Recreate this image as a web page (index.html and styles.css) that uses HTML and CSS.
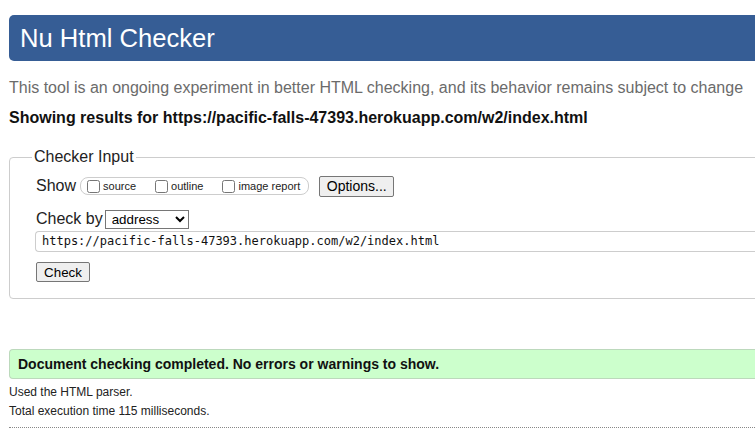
FILE: index.html
```html
<!DOCTYPE html>
<html>
<head>
<meta charset="utf-8">
<link rel="stylesheet" href="styles.css">
</head>
<body>
<div class="page">
  <h1 class="header">Nu Html Checker</h1>
  <p class="intro">This tool is an ongoing experiment in better HTML checking, and its behavior remains subject to change</p>
  <p class="results">Showing results for https://pacific-falls-47393.herokuapp.com/w2/index.html</p>
  <fieldset class="checker">
    <legend class="legend">Checker Input</legend>
    <div class="row show-row">
      <span class="label">Show</span>
      <fieldset class="opts">
        <label class="opt"><input type="checkbox">source</label>
        <label class="opt"><input type="checkbox">outline</label>
        <label class="opt"><input type="checkbox">image report</label>
      </fieldset>
      <button class="btn options">Options...</button>
    </div>
    <div class="row by-row">
      <span class="label">Check by</span>
      <select class="select"><option>address</option></select>
    </div>
    <div class="url">https://pacific-falls-47393.herokuapp.com/w2/index.html</div>
    <button class="btn check">Check</button>
  </fieldset>
  <div class="success">Document checking completed. No errors or warnings to show.</div>
  <p class="meta">Used the HTML parser.</p>
  <p class="meta">Total execution time 115 milliseconds.</p>
  <hr class="dots">
</div>
</body>
</html>
```

FILE: styles.css
```css
html, body {
  margin: 0;
  padding: 0;
  overflow: hidden;
  background: #fff;
}
body {
  font-family: "Liberation Sans", Arial, sans-serif;
  color: #000;
}
.page {
  width: 820px;
  padding: 15px 0 0 9px;
}
.header {
  margin: 0;
  height: 46px;
  line-height: 47px;
  background: #365d95;
  color: #fff;
  font-size: 25.6px;
  font-weight: normal;
  padding-left: 11px;
  border-radius: 5px 0 0 5px;
}
.intro {
  margin: 18px 0 0;
  font-size: 16px;
  line-height: 18px;
  color: #6b6b6b;
}
.results {
  margin: 12px 0 0;
  font-size: 16px;
  line-height: 18px;
  font-weight: bold;
  color: #111;
}
.checker {
  margin: 21px 0 0;
  padding: 7px 0 16px 26px;
  border: 1px solid #cdcdcd;
  border-radius: 4px;
  min-width: 0;
}
.legend {
  padding: 0 2px;
  font-size: 16px;
  color: #222;
  line-height: 18px;
  margin-left: -4px;
}
.row {
  display: flex;
  align-items: center;
}
.label {
  font-size: 16px;
  color: #222;
}
.show-row {
  height: 22px;
  margin-top: 2px;
}
.opts {
  margin: 0 0 0 4px;
  padding: 0 8px 0 6px;
  height: 18px;
  border: 1px solid #cdcdcd;
  border-radius: 8px;
  display: flex;
  align-items: center;
  min-width: 0;
  box-sizing: border-box;
}
.opt {
  display: flex;
  align-items: center;
  font-size: 11px;
  color: #222;
  margin-right: 19px;
}
.opt:last-child {
  margin-right: 0;
}
.opt input {
  margin: 0 3px 0 0;
  width: 13px;
  height: 13px;
}
.btn {
  font-family: "Liberation Sans", Arial, sans-serif;
  font-size: 13.33px;
  background: #efefef;
  border: 1px solid #767676;
  border-radius: 2px;
  color: #000;
  padding: 0 6px;
}
.options {
  margin-left: 10px;
  height: 21px;
  width: 75px;
  font-size: 14px;
}
.by-row {
  margin-top: 12px;
  height: 20px;
}
.select {
  margin-left: 2px;
  width: 84px;
  height: 19px;
  font-family: "Liberation Sans", Arial, sans-serif;
  font-size: 13.33px;
  border: 1px solid #767676;
  border-radius: 0;
  background: #fff;
  padding: 0 0 0 2px;
}
.url {
  margin: 2px 0 0 -1px;
  height: 21px;
  box-sizing: border-box;
  border: 1px solid #cdcdcd;
  border-right: none;
  border-radius: 4px 0 0 4px;
  font-family: "DejaVu Sans Mono", monospace;
  font-size: 12px;
  line-height: 19px;
  padding-left: 6px;
  color: #111;
}
.check {
  margin-top: 10px;
  height: 20px;
  width: 54px;
  padding: 0;
}
.success {
  margin-top: 50px;
  height: 30px;
  box-sizing: border-box;
  background: #ccffcc;
  border: 1px solid #bcd9bc;
  border-right: none;
  border-radius: 4px 0 0 4px;
  font-family: "Liberation Sans", Arial, sans-serif;
  font-weight: bold;
  font-size: 14px;
  line-height: 28px;
  padding-left: 8px;
  color: #111;
}
.meta {
  margin: 7px 0 0;
  font-size: 12px;
  line-height: 13px;
  color: #222;
}
.meta + .meta {
  margin-top: 6px;
}
.dots {
  margin: 9px 0 0;
  border: none;
  border-top: 1px dotted #888;
  height: 0;
}
```
